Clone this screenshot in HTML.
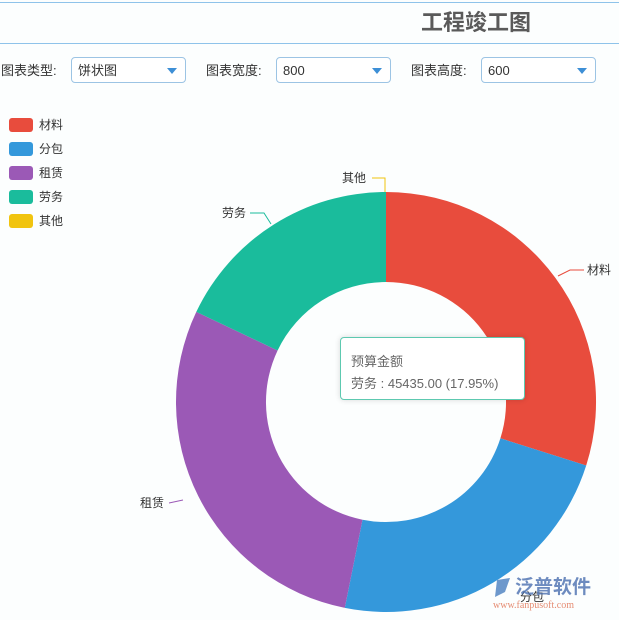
<!DOCTYPE html>
<html><head><meta charset="utf-8"><style>
body{margin:0;width:619px;height:620px;background:#fcfefe;position:relative;overflow:hidden;font-family:"Liberation Sans","Noto Sans CJK SC",sans-serif;}
.hl{position:absolute;left:0;width:619px;height:1px;background:#8ec3ea;}
.title{position:absolute;left:421px;top:5px;font-size:22px;font-weight:bold;color:#5a5a5a;}
.lbl{position:absolute;top:60px;font-size:13px;color:#333;}
.sel{position:absolute;top:57px;height:26px;border:1px solid #9cc4e4;border-radius:4px;background:#fff;font-size:13px;color:#333;line-height:26px;padding-left:6px;box-sizing:border-box;}
.sel:after{content:"";position:absolute;right:8px;top:10px;border-left:5px solid transparent;border-right:5px solid transparent;border-top:6px solid #3d8fd6;}
.lg{position:absolute;left:9px;width:24px;height:14px;border-radius:3px;}
.lt{position:absolute;left:39px;font-size:12px;color:#333;}
.tip{position:absolute;left:340px;top:337px;width:183px;height:61px;border:1px solid #5dc9b0;border-radius:4px;background:#fff;box-shadow:0 0 6px rgba(0,0,0,.15);font-size:13px;color:#666;}
</style></head><body>
<div class="hl" style="top:2px"></div>
<div class="hl" style="top:43px"></div>
<div class="title">工程竣工图</div>
<div class="lbl" style="left:1px">图表类型:</div>
<div class="sel" style="left:71px;width:115px">饼状图</div>
<div class="lbl" style="left:206px">图表宽度:</div>
<div class="sel" style="left:276px;width:115px">800</div>
<div class="lbl" style="left:411px">图表高度:</div>
<div class="sel" style="left:481px;width:115px">600</div>
<div class="lg" style="top:118px;background:#e84c3d"></div><div class="lt" style="top:116px">材料</div>
<div class="lg" style="top:142px;background:#3498db"></div><div class="lt" style="top:140px">分包</div>
<div class="lg" style="top:166px;background:#9b59b6"></div><div class="lt" style="top:164px">租赁</div>
<div class="lg" style="top:190px;background:#1abc9c"></div><div class="lt" style="top:188px">劳务</div>
<div class="lg" style="top:214px;background:#f1c40f"></div><div class="lt" style="top:212px">其他</div>
<svg width="619" height="620" style="position:absolute;left:0;top:0">
<path d="M386,192 A210,210 0 0 1 586.2,465.5 L500.4,438.3 A120,120 0 0 0 386,282Z" fill="#e84c3d"/>
<path d="M586.2,465.5 A210,210 0 0 1 344.8,607.9 L362.5,519.7 A120,120 0 0 0 500.4,438.3Z" fill="#3498db"/>
<path d="M344.8,607.9 A210,210 0 0 1 196.3,311.9 L277.6,350.5 A120,120 0 0 0 362.5,519.7Z" fill="#9b59b6"/>
<path d="M196.3,311.9 A210,210 0 0 1 386,192 L386,282 A120,120 0 0 0 277.6,350.5Z" fill="#1abc9c"/>
<g fill="none" stroke-width="1">
<polyline points="558,276 570,270 584,270" stroke="#e84c3d"/>
<polyline points="385,192 385,178 372,178" stroke="#f1c40f"/>
<polyline points="271,224 264,213 250,213" stroke="#1abc9c"/>
<polyline points="183,500 169,503" stroke="#9b59b6"/>
</g>
<g font-size="12" fill="#333" font-family="Liberation Sans,Noto Sans CJK SC,sans-serif">
<text x="587" y="274">材料</text>
<text x="342" y="182">其他</text>
<text x="222" y="217">劳务</text>
<text x="140" y="507">租赁</text>
<text x="520" y="601">分包</text>
</g>
<g opacity="0.8">
<path d="M497,580 L510,578 L505,592 L495,597Z" fill="#4a7fc0"/>
<text x="515" y="593" font-size="19" font-weight="bold" fill="#4a6fb0" font-family="Noto Sans CJK SC,sans-serif">泛普软件</text>
<text x="493" y="608" font-size="10" fill="#e07050" font-family="Liberation Serif,serif">www.fanpusoft.com</text>
</g>
</svg>
<div class="tip"><div style="position:absolute;left:10px;top:13px">预算金额</div><div style="position:absolute;left:10px;top:35px">劳务 : 45435.00 (17.95%)</div></div>
</body></html>
